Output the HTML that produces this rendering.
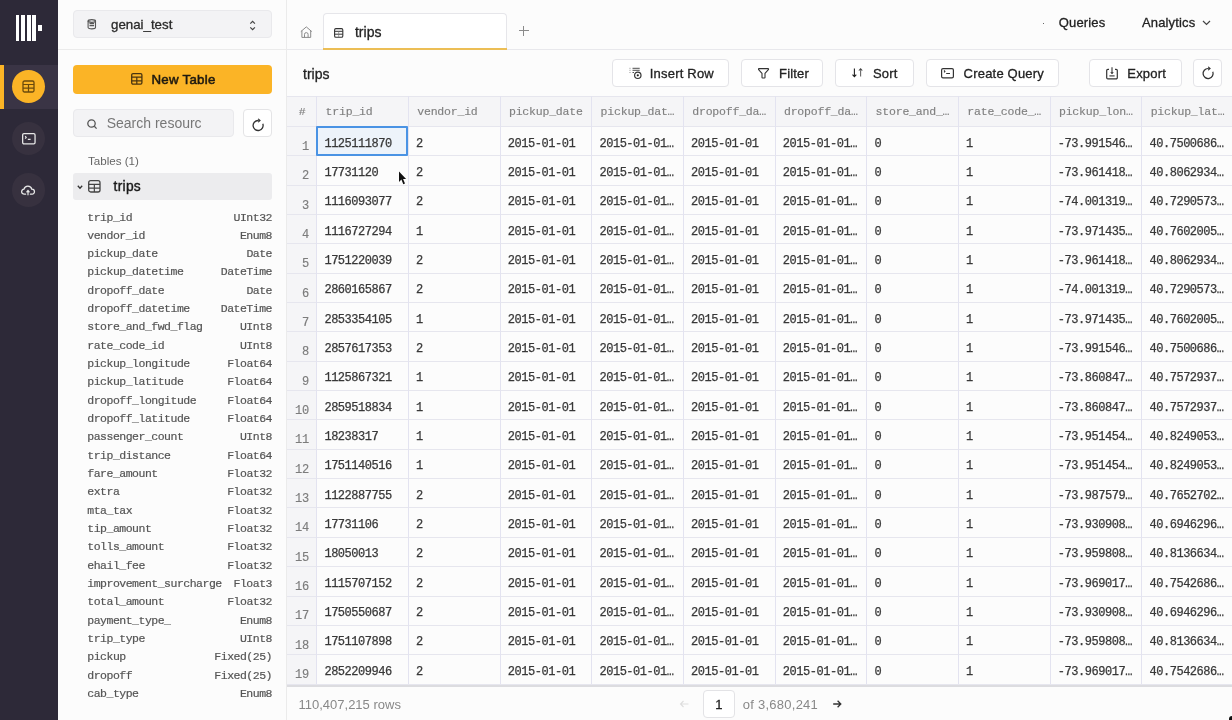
<!DOCTYPE html><html><head><meta charset="utf-8"><style>*{margin:0;padding:0;box-sizing:border-box}
html,body{width:1232px;height:720px;overflow:hidden;background:#fcfcfc;font-family:"Liberation Sans",sans-serif;color:#222;-webkit-font-smoothing:antialiased}
body{will-change:transform}
div,span,svg{position:absolute}
.rail{left:0;top:0;width:58px;height:720px;background:#2d2938}
.logo i{position:absolute;top:15.4px;width:3.4px;height:25.4px;background:#fff}
.logo i.s{top:25px;height:6px;width:3.5px}
.act{left:0;top:64.8px;width:58px;height:44.1px;background:#3a3445}
.actbar{left:0;top:64.8px;width:4.4px;height:44.1px;background:#fbb426}
.circ{left:11.7px;width:33.4px;height:33.4px;border-radius:50%;background:#37313f;display:flex;align-items:center;justify-content:center}
.circ svg{position:static}
.circ.yel{background:#fbb426}
.side{left:58px;top:0;width:229px;height:720px;background:#fcfcfc;border-right:1px solid #ebebeb}
.sdiv{left:0;top:49px;width:228px;height:1px;background:#ebebeb}
.dbsel{left:15px;top:10.3px;width:199px;height:28px;background:#f3f3f5;border:1px solid #e9e9ec;border-radius:4px}
.dbico{left:13px;top:7.6px}
.dbname{left:37px;top:5.8px;font-size:13.3px;color:#2a2a2a;letter-spacing:0px}
.updown{left:175.3px;top:8.6px}
.newtbl{left:15px;top:65.3px;width:199px;height:28.5px;background:#fbb426;border-radius:4px}
.newtbl span{left:78.5px;top:6.5px;font-size:13.3px;font-weight:normal;color:#1f1a10;letter-spacing:0.25px;-webkit-text-stroke:0.55px currentColor}
.search{left:15px;top:109.3px;width:161px;height:28px;background:#f3f3f5;border:1px solid #e9e9ec;border-radius:4px}
.search span{left:32.7px;top:4.8px;font-size:14px;color:#777;white-space:nowrap;width:94px;overflow:hidden}
.refr{left:185px;top:109.3px;width:29px;height:28px;background:#fff;border:1px solid #e4e4e6;border-radius:4px}
.tablesh{left:30px;top:153.6px;font-size:11.6px;color:#666}
.tripsrow{left:15px;top:173.4px;width:199px;height:26.6px;background:#ececee;border-radius:3px}
.tripsrow span{left:40.5px;top:5.3px;font-size:13.8px;font-weight:normal;color:#1a1a1a;letter-spacing:0.3px;-webkit-text-stroke:0.4px currentColor}
.sch{left:29.3px;width:184.7px;height:16px;font-family:"Liberation Mono",monospace;font-size:11.5px;letter-spacing:-0.5px;color:#555;white-space:nowrap}
.sch .sn{left:0;top:0}
.sch .st{right:0;top:0}
.main{left:287px;top:0;width:945px;height:720px;background:#fcfcfc}
.tabbar{left:0;top:49px;width:945px;height:1px;background:#e8e8ec}
.home{left:12.8px;top:26.4px}
.tab{left:36.3px;top:13px;width:184px;height:36.5px;background:#fff;border:1px solid #e6e6ea;border-bottom:none;border-radius:4px 4px 0 0}
.tab span{left:30.7px;top:10px;font-size:14px;color:#222}
.tabline{left:-1px;top:33.5px;width:184px;height:2.5px;background:#ecbe55}
.plus{left:231.5px;top:25.5px;width:10px;height:10px}
.plus:before{content:"";position:absolute;left:0;top:4.3px;width:10px;height:1.4px;background:#8a8a8a}
.plus:after{content:"";position:absolute;left:4.3px;top:0;width:1.4px;height:10px;background:#8a8a8a}
.navdot{left:755.5px;top:22.5px;width:1.4px;height:1.4px;background:#666}
.nav{top:15px;font-size:13px;color:#222;margin-left:-287px;letter-spacing:0.15px}
.title{left:16px;top:66px;font-size:14px;color:#222}
.btn{top:58.6px;height:28.5px;background:#fff;border:1px solid #e4e4e8;border-radius:4px;margin-left:-287px}
.btn span{top:6.8px;font-size:13px;color:#222;white-space:nowrap;letter-spacing:0.2px}
.grid{left:-287px;top:0;width:1232px;height:720px}
.hdr{left:287px;width:945px;background:#f5f5f7}
.numcol{left:287px;width:29.3px;background:#f5f5f7}
.hl{left:287px;width:945px;height:1px;background:#e6e6ee}
.hl2{left:287px;width:945px;height:1.3px;background:#dcdce0}
.vl{width:1px;background:#e3e3f0}
.sel{border:2px solid #4a93e4;background:#edf3fa;border-radius:1px}
.htxt{font-family:"Liberation Mono",monospace;font-size:11.5px;letter-spacing:-0.2px;color:#808080;line-height:31.4px;white-space:nowrap}
.cell{font-family:"Liberation Mono",monospace;font-size:12px;letter-spacing:-0.46px;color:#383838;-webkit-text-stroke:0.25px currentColor;line-height:35.6px;white-space:nowrap}
.rn{left:287px;width:21.7px;text-align:right;font-family:"Liberation Mono",monospace;font-size:12px;color:#7c7c7c;line-height:42px;letter-spacing:-0.4px;-webkit-text-stroke:0.15px currentColor}
.rows{left:11.5px;top:697px;font-size:13px;color:#888}
.pgbox{left:415.5px;top:690.3px;width:32.5px;height:28px;border:1px solid #e3e3e6;border-radius:4px;background:#fff;text-align:center;font-size:13px;line-height:27px;color:#222}
.pgof{left:455.8px;top:697px;font-size:13px;color:#888;letter-spacing:0.25px}
.pgl{left:392px;top:695px;font-size:12px;color:#ddd}
.pgr{left:545.5px;top:695px;font-size:12px;color:#333}

.btn span,.nav,.title,.tab span,.dbname,.pgbox{-webkit-text-stroke:0.3px currentColor}
.sch{-webkit-text-stroke:0.2px currentColor}
.htxt{-webkit-text-stroke:0.15px currentColor}
.corner{left:1229px;top:716px;width:6px;height:6px;background:#111;border-radius:50% 0 0 0;margin-left:-287px}
</style></head><body>
<div class="rail">
<div class="logo"><i style="left:15.9px;width:3.4px"></i><i style="left:21.2px;width:3.6px"></i><i style="left:27px;width:3.5px"></i><i style="left:32.4px;width:3.6px"></i><i class="s" style="left:38.1px"></i></div>
<div class="act"></div><div class="actbar"></div>
<div class="circ yel" style="top:69.9px"><svg width="13" height="13" viewBox="0 0 13 13"><rect x="1" y="1" width="11" height="11" rx="1.5" fill="none" stroke="#6b4a0c" stroke-width="1.3"/><path d="M1 4.5H12M1 8.2H12M6.5 4.5V12" stroke="#6b4a0c" stroke-width="1.2"/></svg></div>
<div class="circ" style="top:121.6px"><svg width="14" height="12" viewBox="0 0 14 12" style="position:relative;left:0.8px;top:0.4px"><rect x="0.65" y="0.65" width="12.4" height="10.2" rx="1.3" fill="none" stroke="#e6e6e6" stroke-width="1.3"/><path d="M3.2 3.2L4.2 4.4L3.2 5.6M5.8 6.3H8.6" stroke="#e6e6e6" stroke-width="1.2" fill="none"/></svg></div>
<div class="circ" style="top:173.3px"><svg width="15" height="12" viewBox="0 0 15 12" style="position:relative;left:0.6px;top:0.2px"><path d="M4.6 10.2H3.3A2.5 2.5 0 0 1 3 5.2A4 4 0 0 1 10.8 5.2A2.5 2.5 0 0 1 11.1 10.2H9.4" fill="none" stroke="#e8e8e8" stroke-width="1.3" stroke-linecap="round"/><path d="M7 10.8V6.6M5.8 7.8L7 6.5L8.2 7.8" fill="none" stroke="#e8e8e8" stroke-width="1.2" stroke-linecap="round"/></svg></div>
</div>
<div class="side">
<div class="sdiv"></div>
<div class="dbsel"><svg class="dbico" width="10" height="11" viewBox="0 0 10 11"><ellipse cx="4.8" cy="2" rx="3.7" ry="1.3" fill="none" stroke="#555" stroke-width="1.2"/><path d="M1.1 2V8.6A3.7 1.3 0 0 0 8.5 8.6V2M2.5 4.6H7.1M2.5 6.6H7.1" fill="none" stroke="#555" stroke-width="1.1"/></svg><span class="dbname">genai_test</span><svg class="updown" width="8" height="12" viewBox="0 0 8 12"><path d="M1.3 3.6L3.6 1.3L5.9 3.6M1.3 7.4L3.6 9.7L5.9 7.4" fill="none" stroke="#444" stroke-width="1.2"/></svg></div>
<div class="newtbl"><svg width="12" height="12" viewBox="0 0 12 12" style="position:absolute;left:57.6px;top:7.8px"><rect x="0.7" y="0.7" width="10.2" height="10.4" rx="1.3" fill="none" stroke="#4a3510" stroke-width="1.3"/><path d="M0.7 4.2H10.9M0.7 7.8H10.9M5.8 4.2V11.1" stroke="#4a3510" stroke-width="1.2"/></svg><span>New Table</span></div>
<div class="search"><svg width="11" height="11" viewBox="0 0 11 11" style="position:absolute;left:13.2px;top:8.6px"><circle cx="4.5" cy="4.5" r="3.7" fill="none" stroke="#555" stroke-width="1.3"/><path d="M7.3 7.3L9.6 9.6" stroke="#555" stroke-width="1.3"/></svg><span>Search resourc</span></div>
<div class="refr"><svg width="14" height="14" viewBox="0 0 14 14" style="position:absolute;left:6.6px;top:7.3px"><path d="M7 2.5A5 5 0 1 0 11.8 5.8" fill="none" stroke="#333" stroke-width="1.3"/><path d="M7.2 0.3V4.8L9.9 2.55Z" fill="#333"/></svg></div>
<div class="tablesh">Tables (1)</div>
<div class="tripsrow"><svg width="7" height="5" viewBox="0 0 7 5" style="position:absolute;left:4px;top:11.3px"><path d="M0.8 0.8L3 3.2L5.2 0.8" fill="none" stroke="#333" stroke-width="1.3"/></svg><svg width="13" height="13" viewBox="0 0 13 13" style="position:absolute;left:15.2px;top:7px"><rect x="0.7" y="0.7" width="11.3" height="11.3" rx="2" fill="none" stroke="#444" stroke-width="1.3"/><path d="M0.7 4.3H12M0.7 8.1H12M6.35 4.3V12" stroke="#444" stroke-width="1.2"/></svg><span>trips</span></div>
<div class="sch" style="top:210.50px"><span class="sn">trip_id</span><span class="st">UInt32</span></div>
<div class="sch" style="top:228.83px"><span class="sn">vendor_id</span><span class="st">Enum8</span></div>
<div class="sch" style="top:247.16px"><span class="sn">pickup_date</span><span class="st">Date</span></div>
<div class="sch" style="top:265.49px"><span class="sn">pickup_datetime</span><span class="st">DateTime</span></div>
<div class="sch" style="top:283.82px"><span class="sn">dropoff_date</span><span class="st">Date</span></div>
<div class="sch" style="top:302.15px"><span class="sn">dropoff_datetime</span><span class="st">DateTime</span></div>
<div class="sch" style="top:320.48px"><span class="sn">store_and_fwd_flag</span><span class="st">UInt8</span></div>
<div class="sch" style="top:338.81px"><span class="sn">rate_code_id</span><span class="st">UInt8</span></div>
<div class="sch" style="top:357.14px"><span class="sn">pickup_longitude</span><span class="st">Float64</span></div>
<div class="sch" style="top:375.47px"><span class="sn">pickup_latitude</span><span class="st">Float64</span></div>
<div class="sch" style="top:393.80px"><span class="sn">dropoff_longitude</span><span class="st">Float64</span></div>
<div class="sch" style="top:412.13px"><span class="sn">dropoff_latitude</span><span class="st">Float64</span></div>
<div class="sch" style="top:430.46px"><span class="sn">passenger_count</span><span class="st">UInt8</span></div>
<div class="sch" style="top:448.79px"><span class="sn">trip_distance</span><span class="st">Float64</span></div>
<div class="sch" style="top:467.12px"><span class="sn">fare_amount</span><span class="st">Float32</span></div>
<div class="sch" style="top:485.45px"><span class="sn">extra</span><span class="st">Float32</span></div>
<div class="sch" style="top:503.78px"><span class="sn">mta_tax</span><span class="st">Float32</span></div>
<div class="sch" style="top:522.11px"><span class="sn">tip_amount</span><span class="st">Float32</span></div>
<div class="sch" style="top:540.44px"><span class="sn">tolls_amount</span><span class="st">Float32</span></div>
<div class="sch" style="top:558.77px"><span class="sn">ehail_fee</span><span class="st">Float32</span></div>
<div class="sch" style="top:577.10px"><span class="sn">improvement_surcharge</span><span class="st">Float3</span></div>
<div class="sch" style="top:595.43px"><span class="sn">total_amount</span><span class="st">Float32</span></div>
<div class="sch" style="top:613.76px"><span class="sn">payment_type_</span><span class="st">Enum8</span></div>
<div class="sch" style="top:632.09px"><span class="sn">trip_type</span><span class="st">UInt8</span></div>
<div class="sch" style="top:650.42px"><span class="sn">pickup</span><span class="st">Fixed(25)</span></div>
<div class="sch" style="top:668.75px"><span class="sn">dropoff</span><span class="st">Fixed(25)</span></div>
<div class="sch" style="top:687.08px"><span class="sn">cab_type</span><span class="st">Enum8</span></div>
</div>
<div class="main">
<div class="tabbar"></div>
<svg class="home" width="14" height="13" viewBox="0 0 14 13"><path d="M0.8 5.6L6.3 0.9L11.8 5.6M1.9 4.7V11.4H10.7V4.7M4.5 11.4V8.4A1.8 1.8 0 0 1 8.1 8.4V11.4" fill="none" stroke="#8a8a8a" stroke-width="1"/></svg>
<div class="tab"><svg width="10" height="10" viewBox="0 0 10 10" style="position:absolute;left:9.6px;top:13.8px"><rect x="0.6" y="0.6" width="8.2" height="8.6" rx="1.3" fill="none" stroke="#333" stroke-width="1.1"/><path d="M0.6 3.3H8.8M0.6 6.2H8.8" stroke="#333" stroke-width="1"/><path d="M4.7 3.3V9.2" stroke="#777" stroke-width="0.7"/></svg><span>trips</span><div class="tabline"></div></div>
<div class="plus"></div>
<div class="navdot"></div><div class="nav" style="left:1058.8px">Queries</div><div class="nav" style="left:1142px">Analytics</div>
<svg width="9" height="6" viewBox="0 0 9 6" style="position:absolute;left:915.4px;top:19.5px"><path d="M1 1L4.5 4.5L8 1" fill="none" stroke="#444" stroke-width="1.2"/></svg>
<div class="title">trips</div>
<div class="btn" style="left:611.7px;width:117.69999999999993px"><svg width="14" height="13" viewBox="0 0 14 13" style="position:absolute;left:16.3px;top:7.4px"><path d="M0.6 1.3H1.4M0.6 3.3H1.4M0.6 5.5H1.4" stroke="#666" stroke-width="0.9"/><path d="M3.5 1.3H10.7M3.5 3.3H10.7M3.5 5.5H5" stroke="#444" stroke-width="0.95"/><circle cx="8.8" cy="8.3" r="3.2" fill="#fff" stroke="#333" stroke-width="1.2"/><circle cx="8.8" cy="8.3" r="1.1" fill="#222"/></svg><span style="left:37.09999999999991px">Insert Row</span></div>
<div class="btn" style="left:740.8px;width:82.60000000000002px"><svg width="12" height="12" viewBox="0 0 12 12" style="position:absolute;left:16.6px;top:8.8px"><path d="M0.9 0.6H10.1Q10.8 0.6 10.4 1.6L7 5.3V9.4Q7 10 6.4 10H4.6Q4 10 4 9.4V5.3L0.6 1.6Q0.2 0.6 0.9 0.6Z" fill="none" stroke="#333" stroke-width="1.1" stroke-linejoin="round"/></svg><span style="left:37.200000000000045px">Filter</span></div>
<div class="btn" style="left:835px;width:78.5px"><svg width="14" height="12" viewBox="0 0 14 12" style="position:absolute;left:15.3px;top:8.2px"><path d="M3.4 0.6V8.6M1.5 6.6L3.4 8.6L5.3 6.6" fill="none" stroke="#222" stroke-width="1.1"/><path d="M9.6 2.5V8.5" fill="none" stroke="#666" stroke-width="1.1"/><path d="M7.4 2.4L9.6 0L11.8 2.4Z" fill="#444"/></svg><span style="left:37px">Sort</span></div>
<div class="btn" style="left:925.5px;width:133.79999999999995px"><svg width="14" height="12" viewBox="0 0 14 12" style="position:absolute;left:14.9px;top:8.2px"><rect x="0.6" y="0.6" width="11.8" height="9.2" rx="1.4" fill="none" stroke="#333" stroke-width="1.2"/><path d="M3.1 2.4L3.9 3.4L3.1 4.4M5.2 5.5H9" stroke="#333" stroke-width="1.1" fill="none"/></svg><span style="left:37.10000000000002px">Create Query</span></div>
<div class="btn" style="left:1089.4px;width:92.19999999999982px"><svg width="13" height="14" viewBox="0 0 13 14" style="position:absolute;left:15.3px;top:7.2px"><path d="M3 2.3H1.9A1.2 1.2 0 0 0 0.7 3.5V10.7A1.2 1.2 0 0 0 1.9 11.9H10.1A1.2 1.2 0 0 0 11.3 10.7V3.5A1.2 1.2 0 0 0 10.1 2.3H9" fill="none" stroke="#333" stroke-width="1.2"/><path d="M6 0.3V6.2" fill="none" stroke="#333" stroke-width="1.1"/><path d="M4.2 5.2L6 7.3L7.8 5.2Z" fill="#333"/><path d="M3.4 8.9H8.6" stroke="#333" stroke-width="1.1"/></svg><span style="left:36.899999999999864px">Export</span></div>
<div class="btn" style="left:1193.3px;width:29.1px"><svg width="14" height="14" viewBox="0 0 14 14" style="position:absolute;left:6.6px;top:6.6px"><path d="M7 2.5A5 5 0 1 0 11.8 5.8" fill="none" stroke="#333" stroke-width="1.25"/><path d="M7.2 0.3V4.8L9.9 2.55Z" fill="#333"/></svg></div>
<div class="grid">
<div class="hdr" style="top:96.3px;height:30.1px"></div>
<div class="numcol" style="top:126.4px;height:557.65px"></div>
<div class="htxt" style="left:298.8px;top:96.3px">#</div>
<div class="htxt" style="left:325.60px;top:96.3px">trip_id</div>
<div class="htxt" style="left:417.27px;top:96.3px">vendor_id</div>
<div class="htxt" style="left:508.94px;top:96.3px">pickup_date</div>
<div class="htxt" style="left:600.61px;top:96.3px">pickup_dat…</div>
<div class="htxt" style="left:692.28px;top:96.3px">dropoff_da…</div>
<div class="htxt" style="left:783.95px;top:96.3px">dropoff_da…</div>
<div class="htxt" style="left:875.62px;top:96.3px">store_and_…</div>
<div class="htxt" style="left:967.29px;top:96.3px">rate_code_…</div>
<div class="htxt" style="left:1058.96px;top:96.3px">pickup_lon…</div>
<div class="htxt" style="left:1150.63px;top:96.3px">pickup_lat…</div>
<div class="hl" style="top:125.90px"></div>
<div class="hl" style="top:155.25px"></div>
<div class="hl" style="top:184.60px"></div>
<div class="hl" style="top:213.95px"></div>
<div class="hl" style="top:243.30px"></div>
<div class="hl" style="top:272.65px"></div>
<div class="hl" style="top:302.00px"></div>
<div class="hl" style="top:331.35px"></div>
<div class="hl" style="top:360.70px"></div>
<div class="hl" style="top:390.05px"></div>
<div class="hl" style="top:419.40px"></div>
<div class="hl" style="top:448.75px"></div>
<div class="hl" style="top:478.10px"></div>
<div class="hl" style="top:507.45px"></div>
<div class="hl" style="top:536.80px"></div>
<div class="hl" style="top:566.15px"></div>
<div class="hl" style="top:595.50px"></div>
<div class="hl" style="top:624.85px"></div>
<div class="hl" style="top:654.20px"></div>
<div class="hl" style="top:683.55px"></div>
<div class="hl" style="top:95.8px"></div>
<div class="hl2" style="top:685.25px"></div>
<div class="vl" style="left:316.30px;top:96.3px;height:587.75px"></div>
<div class="vl" style="left:407.97px;top:96.3px;height:587.75px"></div>
<div class="vl" style="left:499.64px;top:96.3px;height:587.75px"></div>
<div class="vl" style="left:591.31px;top:96.3px;height:587.75px"></div>
<div class="vl" style="left:682.98px;top:96.3px;height:587.75px"></div>
<div class="vl" style="left:774.65px;top:96.3px;height:587.75px"></div>
<div class="vl" style="left:866.32px;top:96.3px;height:587.75px"></div>
<div class="vl" style="left:957.99px;top:96.3px;height:587.75px"></div>
<div class="vl" style="left:1049.66px;top:96.3px;height:587.75px"></div>
<div class="vl" style="left:1141.33px;top:96.3px;height:587.75px"></div>
<div class="vl" style="left:1233.00px;top:96.3px;height:587.75px"></div>
<div class="sel" style="left:316.3px;top:126.4px;width:91.67px;height:29.35px"></div>
<div class="rn" style="top:125.80px">1</div>
<div class="cell" style="left:324.40px;top:126.50px">1125111870</div>
<div class="cell" style="left:416.07px;top:126.50px">2</div>
<div class="cell" style="left:507.74px;top:126.50px">2015-01-01</div>
<div class="cell" style="left:599.41px;top:126.50px">2015-01-01…</div>
<div class="cell" style="left:691.08px;top:126.50px">2015-01-01</div>
<div class="cell" style="left:782.75px;top:126.50px">2015-01-01…</div>
<div class="cell" style="left:874.42px;top:126.50px">0</div>
<div class="cell" style="left:966.09px;top:126.50px">1</div>
<div class="cell" style="left:1057.76px;top:126.50px">-73.991546…</div>
<div class="cell" style="left:1149.43px;top:126.50px">40.7500686…</div>
<div class="rn" style="top:155.15px">2</div>
<div class="cell" style="left:324.40px;top:155.85px">17731120</div>
<div class="cell" style="left:416.07px;top:155.85px">2</div>
<div class="cell" style="left:507.74px;top:155.85px">2015-01-01</div>
<div class="cell" style="left:599.41px;top:155.85px">2015-01-01…</div>
<div class="cell" style="left:691.08px;top:155.85px">2015-01-01</div>
<div class="cell" style="left:782.75px;top:155.85px">2015-01-01…</div>
<div class="cell" style="left:874.42px;top:155.85px">0</div>
<div class="cell" style="left:966.09px;top:155.85px">1</div>
<div class="cell" style="left:1057.76px;top:155.85px">-73.961418…</div>
<div class="cell" style="left:1149.43px;top:155.85px">40.8062934…</div>
<div class="rn" style="top:184.50px">3</div>
<div class="cell" style="left:324.40px;top:185.20px">1116093077</div>
<div class="cell" style="left:416.07px;top:185.20px">2</div>
<div class="cell" style="left:507.74px;top:185.20px">2015-01-01</div>
<div class="cell" style="left:599.41px;top:185.20px">2015-01-01…</div>
<div class="cell" style="left:691.08px;top:185.20px">2015-01-01</div>
<div class="cell" style="left:782.75px;top:185.20px">2015-01-01…</div>
<div class="cell" style="left:874.42px;top:185.20px">0</div>
<div class="cell" style="left:966.09px;top:185.20px">1</div>
<div class="cell" style="left:1057.76px;top:185.20px">-74.001319…</div>
<div class="cell" style="left:1149.43px;top:185.20px">40.7290573…</div>
<div class="rn" style="top:213.85px">4</div>
<div class="cell" style="left:324.40px;top:214.55px">1116727294</div>
<div class="cell" style="left:416.07px;top:214.55px">1</div>
<div class="cell" style="left:507.74px;top:214.55px">2015-01-01</div>
<div class="cell" style="left:599.41px;top:214.55px">2015-01-01…</div>
<div class="cell" style="left:691.08px;top:214.55px">2015-01-01</div>
<div class="cell" style="left:782.75px;top:214.55px">2015-01-01…</div>
<div class="cell" style="left:874.42px;top:214.55px">0</div>
<div class="cell" style="left:966.09px;top:214.55px">1</div>
<div class="cell" style="left:1057.76px;top:214.55px">-73.971435…</div>
<div class="cell" style="left:1149.43px;top:214.55px">40.7602005…</div>
<div class="rn" style="top:243.20px">5</div>
<div class="cell" style="left:324.40px;top:243.90px">1751220039</div>
<div class="cell" style="left:416.07px;top:243.90px">2</div>
<div class="cell" style="left:507.74px;top:243.90px">2015-01-01</div>
<div class="cell" style="left:599.41px;top:243.90px">2015-01-01…</div>
<div class="cell" style="left:691.08px;top:243.90px">2015-01-01</div>
<div class="cell" style="left:782.75px;top:243.90px">2015-01-01…</div>
<div class="cell" style="left:874.42px;top:243.90px">0</div>
<div class="cell" style="left:966.09px;top:243.90px">1</div>
<div class="cell" style="left:1057.76px;top:243.90px">-73.961418…</div>
<div class="cell" style="left:1149.43px;top:243.90px">40.8062934…</div>
<div class="rn" style="top:272.55px">6</div>
<div class="cell" style="left:324.40px;top:273.25px">2860165867</div>
<div class="cell" style="left:416.07px;top:273.25px">2</div>
<div class="cell" style="left:507.74px;top:273.25px">2015-01-01</div>
<div class="cell" style="left:599.41px;top:273.25px">2015-01-01…</div>
<div class="cell" style="left:691.08px;top:273.25px">2015-01-01</div>
<div class="cell" style="left:782.75px;top:273.25px">2015-01-01…</div>
<div class="cell" style="left:874.42px;top:273.25px">0</div>
<div class="cell" style="left:966.09px;top:273.25px">1</div>
<div class="cell" style="left:1057.76px;top:273.25px">-74.001319…</div>
<div class="cell" style="left:1149.43px;top:273.25px">40.7290573…</div>
<div class="rn" style="top:301.90px">7</div>
<div class="cell" style="left:324.40px;top:302.60px">2853354105</div>
<div class="cell" style="left:416.07px;top:302.60px">1</div>
<div class="cell" style="left:507.74px;top:302.60px">2015-01-01</div>
<div class="cell" style="left:599.41px;top:302.60px">2015-01-01…</div>
<div class="cell" style="left:691.08px;top:302.60px">2015-01-01</div>
<div class="cell" style="left:782.75px;top:302.60px">2015-01-01…</div>
<div class="cell" style="left:874.42px;top:302.60px">0</div>
<div class="cell" style="left:966.09px;top:302.60px">1</div>
<div class="cell" style="left:1057.76px;top:302.60px">-73.971435…</div>
<div class="cell" style="left:1149.43px;top:302.60px">40.7602005…</div>
<div class="rn" style="top:331.25px">8</div>
<div class="cell" style="left:324.40px;top:331.95px">2857617353</div>
<div class="cell" style="left:416.07px;top:331.95px">2</div>
<div class="cell" style="left:507.74px;top:331.95px">2015-01-01</div>
<div class="cell" style="left:599.41px;top:331.95px">2015-01-01…</div>
<div class="cell" style="left:691.08px;top:331.95px">2015-01-01</div>
<div class="cell" style="left:782.75px;top:331.95px">2015-01-01…</div>
<div class="cell" style="left:874.42px;top:331.95px">0</div>
<div class="cell" style="left:966.09px;top:331.95px">1</div>
<div class="cell" style="left:1057.76px;top:331.95px">-73.991546…</div>
<div class="cell" style="left:1149.43px;top:331.95px">40.7500686…</div>
<div class="rn" style="top:360.60px">9</div>
<div class="cell" style="left:324.40px;top:361.30px">1125867321</div>
<div class="cell" style="left:416.07px;top:361.30px">1</div>
<div class="cell" style="left:507.74px;top:361.30px">2015-01-01</div>
<div class="cell" style="left:599.41px;top:361.30px">2015-01-01…</div>
<div class="cell" style="left:691.08px;top:361.30px">2015-01-01</div>
<div class="cell" style="left:782.75px;top:361.30px">2015-01-01…</div>
<div class="cell" style="left:874.42px;top:361.30px">0</div>
<div class="cell" style="left:966.09px;top:361.30px">1</div>
<div class="cell" style="left:1057.76px;top:361.30px">-73.860847…</div>
<div class="cell" style="left:1149.43px;top:361.30px">40.7572937…</div>
<div class="rn" style="top:389.95px">10</div>
<div class="cell" style="left:324.40px;top:390.65px">2859518834</div>
<div class="cell" style="left:416.07px;top:390.65px">1</div>
<div class="cell" style="left:507.74px;top:390.65px">2015-01-01</div>
<div class="cell" style="left:599.41px;top:390.65px">2015-01-01…</div>
<div class="cell" style="left:691.08px;top:390.65px">2015-01-01</div>
<div class="cell" style="left:782.75px;top:390.65px">2015-01-01…</div>
<div class="cell" style="left:874.42px;top:390.65px">0</div>
<div class="cell" style="left:966.09px;top:390.65px">1</div>
<div class="cell" style="left:1057.76px;top:390.65px">-73.860847…</div>
<div class="cell" style="left:1149.43px;top:390.65px">40.7572937…</div>
<div class="rn" style="top:419.30px">11</div>
<div class="cell" style="left:324.40px;top:420.00px">18238317</div>
<div class="cell" style="left:416.07px;top:420.00px">1</div>
<div class="cell" style="left:507.74px;top:420.00px">2015-01-01</div>
<div class="cell" style="left:599.41px;top:420.00px">2015-01-01…</div>
<div class="cell" style="left:691.08px;top:420.00px">2015-01-01</div>
<div class="cell" style="left:782.75px;top:420.00px">2015-01-01…</div>
<div class="cell" style="left:874.42px;top:420.00px">0</div>
<div class="cell" style="left:966.09px;top:420.00px">1</div>
<div class="cell" style="left:1057.76px;top:420.00px">-73.951454…</div>
<div class="cell" style="left:1149.43px;top:420.00px">40.8249053…</div>
<div class="rn" style="top:448.65px">12</div>
<div class="cell" style="left:324.40px;top:449.35px">1751140516</div>
<div class="cell" style="left:416.07px;top:449.35px">1</div>
<div class="cell" style="left:507.74px;top:449.35px">2015-01-01</div>
<div class="cell" style="left:599.41px;top:449.35px">2015-01-01…</div>
<div class="cell" style="left:691.08px;top:449.35px">2015-01-01</div>
<div class="cell" style="left:782.75px;top:449.35px">2015-01-01…</div>
<div class="cell" style="left:874.42px;top:449.35px">0</div>
<div class="cell" style="left:966.09px;top:449.35px">1</div>
<div class="cell" style="left:1057.76px;top:449.35px">-73.951454…</div>
<div class="cell" style="left:1149.43px;top:449.35px">40.8249053…</div>
<div class="rn" style="top:478.00px">13</div>
<div class="cell" style="left:324.40px;top:478.70px">1122887755</div>
<div class="cell" style="left:416.07px;top:478.70px">2</div>
<div class="cell" style="left:507.74px;top:478.70px">2015-01-01</div>
<div class="cell" style="left:599.41px;top:478.70px">2015-01-01…</div>
<div class="cell" style="left:691.08px;top:478.70px">2015-01-01</div>
<div class="cell" style="left:782.75px;top:478.70px">2015-01-01…</div>
<div class="cell" style="left:874.42px;top:478.70px">0</div>
<div class="cell" style="left:966.09px;top:478.70px">1</div>
<div class="cell" style="left:1057.76px;top:478.70px">-73.987579…</div>
<div class="cell" style="left:1149.43px;top:478.70px">40.7652702…</div>
<div class="rn" style="top:507.35px">14</div>
<div class="cell" style="left:324.40px;top:508.05px">17731106</div>
<div class="cell" style="left:416.07px;top:508.05px">2</div>
<div class="cell" style="left:507.74px;top:508.05px">2015-01-01</div>
<div class="cell" style="left:599.41px;top:508.05px">2015-01-01…</div>
<div class="cell" style="left:691.08px;top:508.05px">2015-01-01</div>
<div class="cell" style="left:782.75px;top:508.05px">2015-01-01…</div>
<div class="cell" style="left:874.42px;top:508.05px">0</div>
<div class="cell" style="left:966.09px;top:508.05px">1</div>
<div class="cell" style="left:1057.76px;top:508.05px">-73.930908…</div>
<div class="cell" style="left:1149.43px;top:508.05px">40.6946296…</div>
<div class="rn" style="top:536.70px">15</div>
<div class="cell" style="left:324.40px;top:537.40px">18050013</div>
<div class="cell" style="left:416.07px;top:537.40px">2</div>
<div class="cell" style="left:507.74px;top:537.40px">2015-01-01</div>
<div class="cell" style="left:599.41px;top:537.40px">2015-01-01…</div>
<div class="cell" style="left:691.08px;top:537.40px">2015-01-01</div>
<div class="cell" style="left:782.75px;top:537.40px">2015-01-01…</div>
<div class="cell" style="left:874.42px;top:537.40px">0</div>
<div class="cell" style="left:966.09px;top:537.40px">1</div>
<div class="cell" style="left:1057.76px;top:537.40px">-73.959808…</div>
<div class="cell" style="left:1149.43px;top:537.40px">40.8136634…</div>
<div class="rn" style="top:566.05px">16</div>
<div class="cell" style="left:324.40px;top:566.75px">1115707152</div>
<div class="cell" style="left:416.07px;top:566.75px">2</div>
<div class="cell" style="left:507.74px;top:566.75px">2015-01-01</div>
<div class="cell" style="left:599.41px;top:566.75px">2015-01-01…</div>
<div class="cell" style="left:691.08px;top:566.75px">2015-01-01</div>
<div class="cell" style="left:782.75px;top:566.75px">2015-01-01…</div>
<div class="cell" style="left:874.42px;top:566.75px">0</div>
<div class="cell" style="left:966.09px;top:566.75px">1</div>
<div class="cell" style="left:1057.76px;top:566.75px">-73.969017…</div>
<div class="cell" style="left:1149.43px;top:566.75px">40.7542686…</div>
<div class="rn" style="top:595.40px">17</div>
<div class="cell" style="left:324.40px;top:596.10px">1750550687</div>
<div class="cell" style="left:416.07px;top:596.10px">2</div>
<div class="cell" style="left:507.74px;top:596.10px">2015-01-01</div>
<div class="cell" style="left:599.41px;top:596.10px">2015-01-01…</div>
<div class="cell" style="left:691.08px;top:596.10px">2015-01-01</div>
<div class="cell" style="left:782.75px;top:596.10px">2015-01-01…</div>
<div class="cell" style="left:874.42px;top:596.10px">0</div>
<div class="cell" style="left:966.09px;top:596.10px">1</div>
<div class="cell" style="left:1057.76px;top:596.10px">-73.930908…</div>
<div class="cell" style="left:1149.43px;top:596.10px">40.6946296…</div>
<div class="rn" style="top:624.75px">18</div>
<div class="cell" style="left:324.40px;top:625.45px">1751107898</div>
<div class="cell" style="left:416.07px;top:625.45px">2</div>
<div class="cell" style="left:507.74px;top:625.45px">2015-01-01</div>
<div class="cell" style="left:599.41px;top:625.45px">2015-01-01…</div>
<div class="cell" style="left:691.08px;top:625.45px">2015-01-01</div>
<div class="cell" style="left:782.75px;top:625.45px">2015-01-01…</div>
<div class="cell" style="left:874.42px;top:625.45px">0</div>
<div class="cell" style="left:966.09px;top:625.45px">1</div>
<div class="cell" style="left:1057.76px;top:625.45px">-73.959808…</div>
<div class="cell" style="left:1149.43px;top:625.45px">40.8136634…</div>
<div class="rn" style="top:654.10px">19</div>
<div class="cell" style="left:324.40px;top:654.80px">2852209946</div>
<div class="cell" style="left:416.07px;top:654.80px">2</div>
<div class="cell" style="left:507.74px;top:654.80px">2015-01-01</div>
<div class="cell" style="left:599.41px;top:654.80px">2015-01-01…</div>
<div class="cell" style="left:691.08px;top:654.80px">2015-01-01</div>
<div class="cell" style="left:782.75px;top:654.80px">2015-01-01…</div>
<div class="cell" style="left:874.42px;top:654.80px">0</div>
<div class="cell" style="left:966.09px;top:654.80px">1</div>
<div class="cell" style="left:1057.76px;top:654.80px">-73.969017…</div>
<div class="cell" style="left:1149.43px;top:654.80px">40.7542686…</div>
</div>
<svg width="14" height="18" viewBox="0 0 14 18" style="position:absolute;left:110px;top:169.5px"><path d="M2 1.5V11.9L4.4 9.6L6.3 14.2L8 13.5L6.1 9H9.1Z" fill="#111" stroke="#fff" stroke-width="1" stroke-linejoin="round" paint-order="stroke"/></svg>
<div class="rows">110,407,215 rows</div>
<svg width="12" height="10" viewBox="0 0 12 10" style="position:absolute;left:391.5px;top:699px"><path d="M9.5 5H1.5M4.5 2L1.5 5L4.5 8" fill="none" stroke="#ddd" stroke-width="1.1"/></svg><div class="pgbox">1</div><div class="pgof">of 3,680,241</div><svg width="12" height="10" viewBox="0 0 12 10" style="position:absolute;left:545.3px;top:699px"><path d="M1.2 5H8.8M5.6 1.8L8.8 5L5.6 8.2" fill="none" stroke="#333" stroke-width="1.3"/></svg>
<div class="corner"></div>
</div>
</body></html>
